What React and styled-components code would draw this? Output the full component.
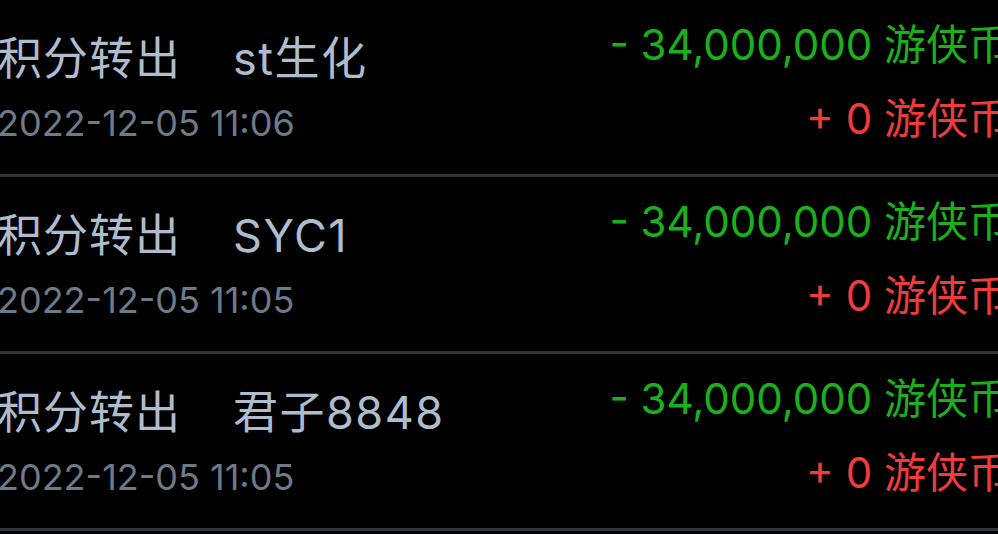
import React from 'react'
import styled, { createGlobalStyle } from 'styled-components'

const GlobalStyle = createGlobalStyle`
  html, body {
    margin: 0;
    padding: 0;
    background: #000;
    overflow: hidden;
  }
  body {
    font-family: Inter, "Noto Sans", "Noto Sans CJK SC", sans-serif;
    -webkit-font-smoothing: antialiased;
  }
`

const records = [
  { target: 'st生化', time: '2022-12-05 11:06', out: '34,000,000', back: '0' },
  { target: 'SYC1', time: '2022-12-05 11:05', out: '34,000,000', back: '0' },
  { target: '君子8848', time: '2022-12-05 11:05', out: '34,000,000', back: '0' },
]

function App() {
  return (
    <React.Fragment>
      <GlobalStyle />
      <List>
        {records.map((r, i) => (
          <Row key={i}>
            <Info>
              <Title>
                积分转出<Target>{r.target}</Target>
              </Title>
              <Time>{r.time}</Time>
            </Info>
            <Amounts>
              <Amount tone="out">- {r.out} 游侠币</Amount>
              <Amount tone="in" $gap>+ {r.back} 游侠币</Amount>
            </Amounts>
          </Row>
        ))}
      </List>
    </React.Fragment>
  )
}

const List = styled.div`
  margin: 0 -12px 0 -3px;
`

const Row = styled.div`
  display: flex;
  justify-content: space-between;
  align-items: flex-start;
  height: 174px;
  border-bottom: 3px solid #2c3640;
`

const Info = styled.div`
  display: flex;
  flex-direction: column;
  padding-top: 27px;
`

const Title = styled.div`
  font-size: 45px;
  line-height: 64px;
  letter-spacing: 1px;
  color: #aebccd;
  white-space: nowrap;
`

const Target = styled.span`
  margin-left: 52px;
  letter-spacing: 1.5px;
`

const Time = styled.div`
  margin-top: 9px;
  font-size: 36px;
  line-height: 46px;
  color: #6c7a89;
  white-space: nowrap;
`

const Amounts = styled.div`
  display: flex;
  flex-direction: column;
  align-items: flex-end;
  padding-top: 17px;
`

const Amount = styled.div`
  margin-top: ${p => (p.$gap ? '18px' : '0')};
  font-size: 42px;
  line-height: 56px;
  color: ${p => (p.tone === 'out' ? '#1bb01b' : '#f03b3b')};
  white-space: nowrap;
`

export default App
